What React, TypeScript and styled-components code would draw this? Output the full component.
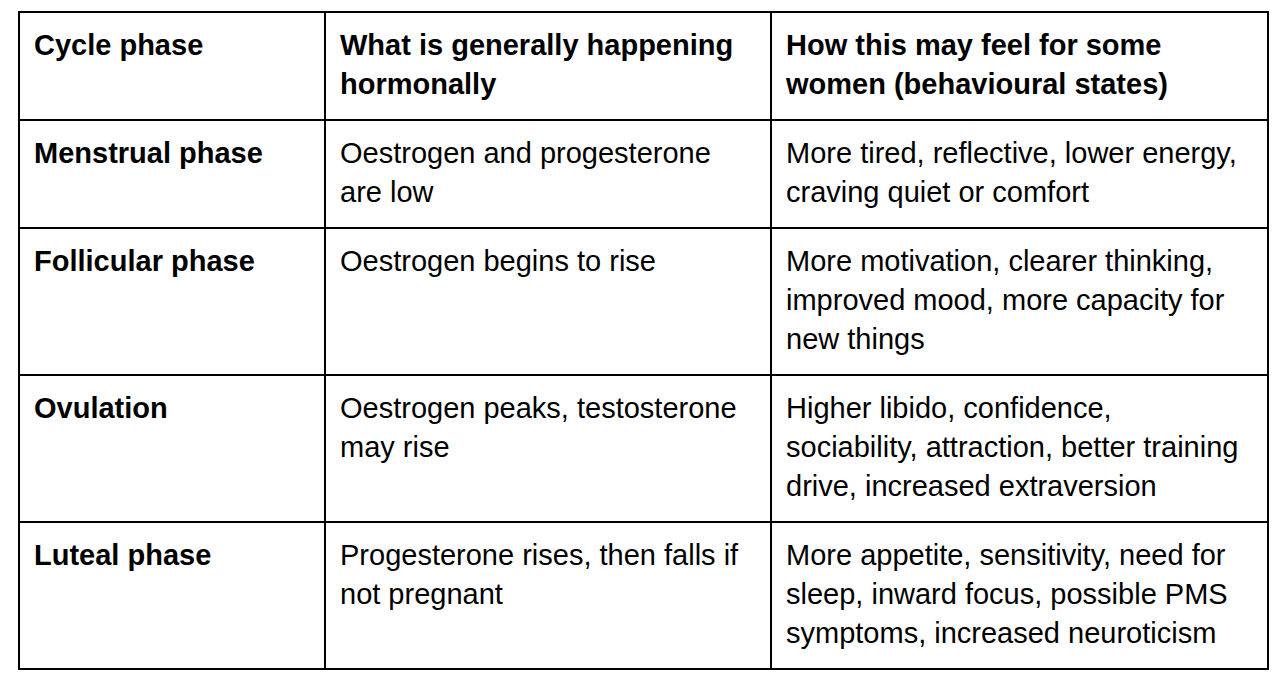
import styled, { createGlobalStyle } from 'styled-components';

const GlobalStyle = createGlobalStyle`
  html, body {
    margin: 0;
    padding: 0;
    background: #ffffff;
  }
  body {
    font-family: "Liberation Sans", Arial, sans-serif;
    color: #000000;
  }
`;

const Page = styled.div`
  padding: 11px 0 0 18px;
`;

const Table = styled.table`
  width: 1249px;
  border-collapse: collapse;
  table-layout: fixed;
  font-size: 29px;
  line-height: 39px;
`;

const Col = styled.col<{ $width: number }>`
  width: ${(p) => p.$width}px;
`;

const HeadCell = styled.th`
  border: 2px solid #000;
  padding: 13px 20px 15px 14px;
  text-align: left;
  vertical-align: top;
  font-weight: 700;
`;

const Cell = styled.td<{ $bold?: boolean }>`
  border: 2px solid #000;
  padding: 13px 20px 15px 14px;
  vertical-align: top;
  font-weight: ${(p) => (p.$bold ? 700 : 400)};
`;

const rows = [
  {
    phase: 'Menstrual phase',
    hormones: 'Oestrogen and progesterone are low',
    feel: 'More tired, reflective, lower energy, craving quiet or comfort',
  },
  {
    phase: 'Follicular phase',
    hormones: 'Oestrogen begins to rise',
    feel: 'More motivation, clearer thinking, improved mood, more capacity for new things',
  },
  {
    phase: 'Ovulation',
    hormones: 'Oestrogen peaks, testosterone may rise',
    feel: 'Higher libido, confidence, sociability, attraction, better training drive, increased extraversion',
  },
  {
    phase: 'Luteal phase',
    hormones: 'Progesterone rises, then falls if not pregnant',
    feel: 'More appetite, sensitivity, need for sleep, inward focus, possible PMS symptoms, increased neuroticism',
  },
];

const App = () => {
  return (
    <Page>
      <GlobalStyle />
      <Table>
        <colgroup>
          <Col $width={306} />
          <Col $width={446} />
          <Col $width={497} />
        </colgroup>
        <thead>
          <tr>
            <HeadCell>Cycle phase</HeadCell>
            <HeadCell>What is generally happening hormonally</HeadCell>
            <HeadCell>How this may feel for some women (behavioural states)</HeadCell>
          </tr>
        </thead>
        <tbody>
          {rows.map((r) => (
            <tr key={r.phase}>
              <Cell $bold>{r.phase}</Cell>
              <Cell>{r.hormones}</Cell>
              <Cell>{r.feel}</Cell>
            </tr>
          ))}
        </tbody>
      </Table>
    </Page>
  );
};

export default App;
